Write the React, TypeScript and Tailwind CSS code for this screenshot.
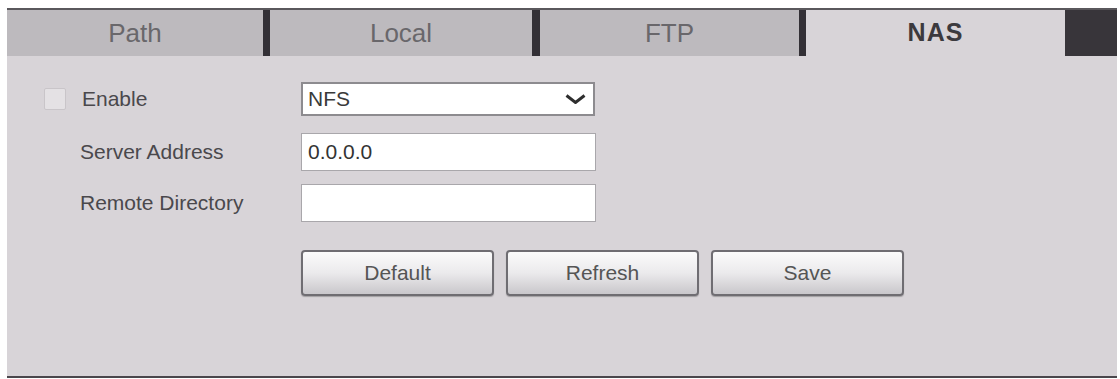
import React from 'react'

const FONT = { fontFamily: '"Liberation Sans", Arial, sans-serif' }

const TABS = [
  { label: 'Path', width: 'w-[256px]' },
  { label: 'Local', width: 'w-[262px]' },
  { label: 'FTP', width: 'w-[259px]' },
]

function Chevron() {
  return (
    <svg width="21" height="10" viewBox="0 0 21 10" className="shrink-0">
      <path d="M1.5 1.5 L10.5 8.5 L19.5 1.5" fill="none" stroke="#2e2e2e" strokeWidth="3" strokeLinejoin="miter" />
    </svg>
  )
}

function Btn({ label }: { label: string }) {
  return (
    <button className="w-[193px] h-[46px] rounded-[4px] border-2 border-[#6f6d72] bg-gradient-to-b from-[#fbfbfb] via-[#ebeaec] to-[#c9c7cb] text-[21px] text-[#555] shadow-[0_1px_1px_rgba(0,0,0,0.25)]">
      {label}
    </button>
  )
}

export default function App() {
  return (
    <div className="w-[1120px] h-[379px] bg-white pt-[8px] pl-[7px]" style={FONT}>
      <div className="w-[1110px] h-[370px] bg-[#d8d4d8] border-b-2 border-[#4a474c] flex flex-col">
        {/* tabs */}
        <div className="flex h-[48px] border-t-2 border-[#5a585c]">
          {TABS.map((t, i) => (
            <React.Fragment key={t.label}>
              <div className={`${t.width} bg-[#bdbabe] flex items-center justify-center text-[26px] text-[#69676b]`}>
                {t.label}
              </div>
              <div className={i === 1 ? 'w-[8px] bg-[#333036]' : 'w-[7px] bg-[#333036]'} />
            </React.Fragment>
          ))}
          <div className="w-[259px] bg-[#d8d4d8] flex items-center justify-center text-[25px] font-bold tracking-[1px] text-[#3c3a3e]">
            NAS
          </div>
          <div className="w-[52px] bg-[#38353a]" />
        </div>

        {/* form */}
        <div className="pl-[37px] pt-[26px] flex flex-col">
          <div className="flex items-center h-[34px]">
            <div className="w-[22px] h-[22px] rounded-[2px] border border-[#c9c5c9] bg-[#e4e1e4]" />
            <span className="ml-[16px] w-[219px] text-[21px] text-[#4a484c]">Enable</span>
            <div className="w-[294px] h-[34px] bg-white border-2 border-[#8d8b8f] flex items-center justify-between pl-[5px] pr-[7px] text-[21px] text-[#3a3a3a]">
              <span>NFS</span>
              <Chevron />
            </div>
          </div>

          <div className="flex items-center h-[38px] mt-[17px]">
            <span className="ml-[36px] w-[221px] text-[21px] text-[#4a484c]">Server Address</span>
            <div className="w-[295px] h-[38px] bg-white border border-[#a9a7ab] flex items-center pl-[6px] text-[21px] text-[#333]">
              0.0.0.0
            </div>
          </div>

          <div className="flex items-center h-[38px] mt-[13px]">
            <span className="ml-[36px] w-[221px] text-[21px] text-[#4a484c]">Remote Directory</span>
            <div className="w-[295px] h-[38px] bg-white border border-[#a9a7ab]" />
          </div>

          <div className="flex gap-[12px] mt-[28px] ml-[257px]">
            <Btn label="Default" />
            <Btn label="Refresh" />
            <Btn label="Save" />
          </div>
        </div>
      </div>
    </div>
  )
}
